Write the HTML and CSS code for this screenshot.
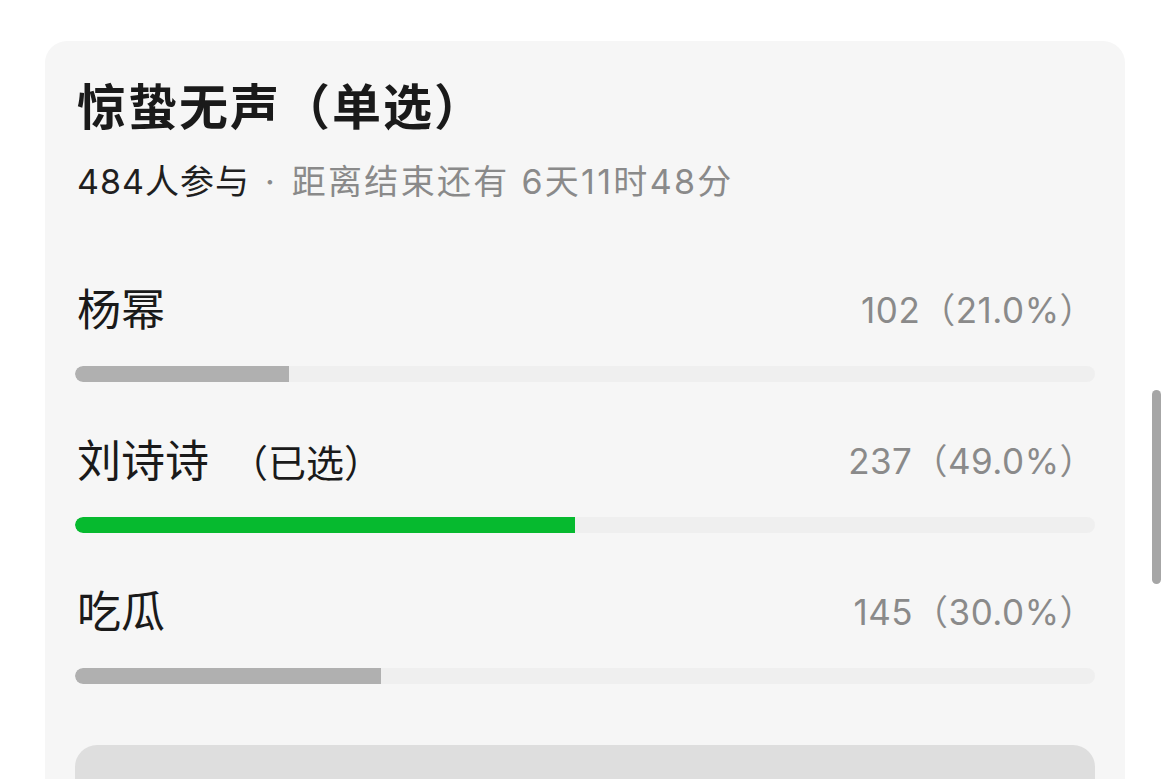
FILE: index.html
```html
<!DOCTYPE html>
<html lang="zh-CN">
<head>
<meta charset="utf-8">
<title>投票</title>
<link rel="stylesheet" href="styles.css">
</head>
<body>
<main class="page">
  <section class="vote-card">
    <h1 class="vote-title">惊蛰无声（单选）</h1>
    <p class="vote-meta"><span class="meta-count">484人参与</span><span class="meta-dot">·</span><span class="meta-time">距离结束还有 6天11时48分</span></p>

    <ul class="options">
      <li class="option">
        <div class="option-head">
          <span class="option-name">杨幂</span>
          <span class="option-count">102（21.0%）</span>
        </div>
        <div class="bar"><div class="bar-fill" style="width:21%"></div></div>
      </li>
      <li class="option">
        <div class="option-head">
          <span class="option-name">刘诗诗<span class="option-mine">（已选）</span></span>
          <span class="option-count">237（49.0%）</span>
        </div>
        <div class="bar"><div class="bar-fill bar-fill--mine" style="width:49%"></div></div>
      </li>
      <li class="option">
        <div class="option-head">
          <span class="option-name">吃瓜</span>
          <span class="option-count">145（30.0%）</span>
        </div>
        <div class="bar"><div class="bar-fill" style="width:30%"></div></div>
      </li>
    </ul>

    <div class="vote-button"></div>
  </section>
</main>
<div class="scroll-thumb"></div>
</body>
</html>
```

FILE: styles.css
```css
* {
  box-sizing: border-box;
}

html, body {
  margin: 0;
  padding: 0;
  background: #ffffff;
  overflow: hidden;
}

body {
  font-family: Inter, "Noto Sans CJK SC", sans-serif;
  color: #1a1a1a;
  height: 779px;
}

.page {
  padding: 41px 45px 0 45px;
}

.vote-card {
  background: #f6f6f6;
  border-radius: 22px;
  padding: 33px 30px 0 30px;
  height: 760px;
}

.vote-title {
  margin: 0 0 0 2px;
  font-family: "Noto Sans CJK SC", sans-serif;
  font-size: 49px;
  font-weight: 700;
  letter-spacing: 2px;
  line-height: 60px;
  color: #1a1a1a;
}

.vote-meta {
  margin: 28px 0 0 2px;
  font-size: 34px;
  line-height: 40px;
  letter-spacing: 1px;
  color: #8a8a8a;
}

.meta-count {
  color: #1f1f1f;
}

.meta-dot {
  margin: 0 16px 0 15px;
}

.meta-time {
  letter-spacing: 2.3px;
}

.options {
  list-style: none;
  margin: 75px 0 0 0;
  padding: 0;
  display: flex;
  flex-direction: column;
  gap: 46px;
}

.option-head {
  height: 60px;
  display: flex;
  align-items: center;
  justify-content: space-between;
  padding-left: 2px;
}

.option-name {
  font-family: "Noto Sans CJK SC", sans-serif;
  font-size: 44px;
  color: #1a1a1a;
}

.option-mine {
  margin-left: 21px;
  font-size: 38px;
}

.option-count {
  font-size: 35px;
  letter-spacing: 0.5px;
  color: #8a8a8a;
}

.bar {
  margin-top: 29px;
  height: 16px;
  border-radius: 8px;
  background: #efefef;
  overflow: hidden;
}

.bar-fill {
  height: 100%;
  background: #b0b0b0;
  border-radius: 8px 0 0 8px;
}

.bar-fill--mine {
  background: #06ba2f;
}

.vote-button {
  margin-top: 61px;
  height: 110px;
  border-radius: 22px;
  background: #dedede;
}

.scroll-thumb {
  position: fixed;
  left: 1152px;
  top: 390px;
  width: 9px;
  height: 194px;
  border-radius: 5px;
  background: #a6a6a6;
}
```
